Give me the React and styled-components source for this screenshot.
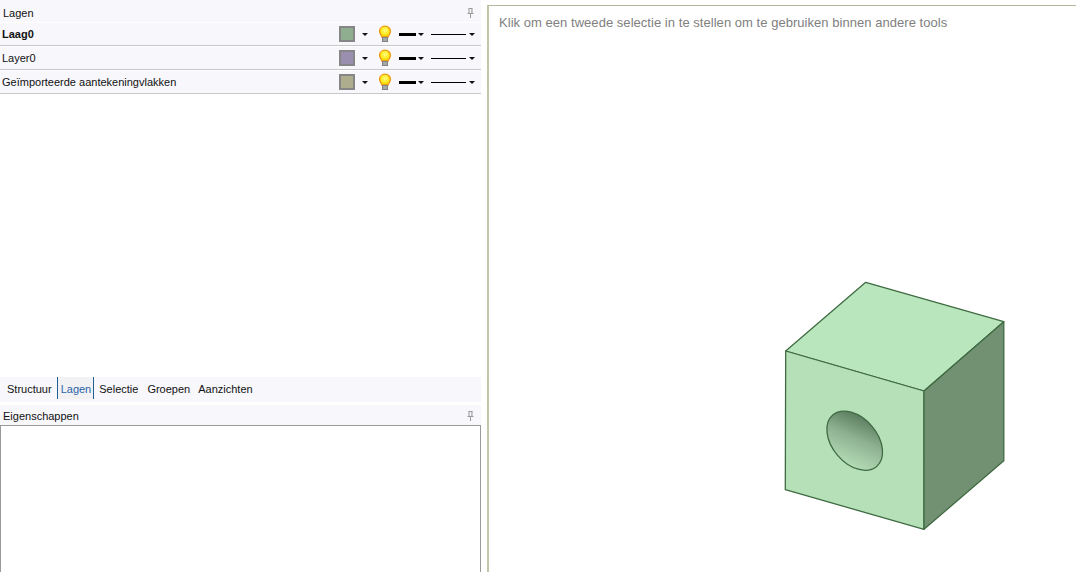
import React from 'react';
import styled, { createGlobalStyle } from 'styled-components';

const GlobalStyle = createGlobalStyle`
  html, body {
    margin: 0;
    padding: 0;
    background: #fff;
  }
  body {
    font-family: "Liberation Sans", Arial, sans-serif;
    font-size: 11px;
    color: #111;
  }
`;

const Page = styled.div`
  display: flex;
  width: 1076px;
  height: 572px;
  overflow: hidden;
  background: #fff;
`;

const SidePanel = styled.div`
  display: flex;
  flex-direction: column;
  width: 481px;
  flex: none;
`;

const DockHeader = styled.div`
  display: flex;
  align-items: center;
  justify-content: space-between;
  height: ${p => p.$height}px;
  margin-top: ${p => p.$top || 0}px;
  padding: ${p => p.$inset}px 6px 0 3px;
  box-sizing: border-box;
  background: #f7f7fc;
  flex: none;
`;

const LayerList = styled.div`
  flex: 1;
  background: #fff;
`;

const Row = styled.div`
  display: flex;
  align-items: center;
  height: 22px;
  margin-top: 1px;
  padding-left: 2px;
  background: #f7f7fc;
  border-bottom: 1px solid #c8c8c8;
`;

const RowName = styled.span`
  flex: 1;
  font-weight: ${p => (p.$active ? 700 : 400)};
`;

const Swatch = styled.span`
  width: 12px;
  height: 12px;
  border: 2px solid #868686;
  background: ${p => p.$color};
`;

const Caret = styled.span`
  width: 0;
  height: 0;
  margin-left: ${p => p.$gap}px;
  border-left: 3px solid transparent;
  border-right: 3px solid transparent;
  border-top: 3px solid #111;
`;

const Bulb = styled.svg`
  width: 14px;
  height: 18px;
  margin-left: 10px;
`;

const LineSample = styled.span`
  height: ${p => p.$weight}px;
  width: ${p => p.$width}px;
  margin-left: ${p => p.$gap}px;
  background: #000;
`;

const RowTools = styled.div`
  display: flex;
  align-items: center;
  padding-right: 6px;
`;

const TabBar = styled.div`
  display: flex;
  align-items: flex-start;
  height: 25px;
  padding-left: 5px;
  background: #f7f7fc;
  flex: none;
`;

const Tab = styled.div`
  display: flex;
  align-items: center;
  height: 22px;
  padding: 1px 2px 0 ${p => (p.$active ? '3px' : '2px')};
  box-sizing: border-box;
  margin-right: ${p => p.$gap}px;
  color: ${p => (p.$active ? '#2a62a8' : '#111')};
  background: ${p => (p.$active ? '#f2f2f4' : 'transparent')};
  border-left: ${p => (p.$active ? '1px solid #1f5f93' : 'none')};
  border-right: ${p => (p.$active ? '1px solid #1f5f93' : 'none')};
`;

const PropertiesBox = styled.div`
  height: 147px;
  box-sizing: border-box;
  border: 1px solid #9a9a9a;
  border-bottom: none;
  background: #fff;
  flex: none;
`;

const Viewer = styled.div`
  position: relative;
  flex: 1;
  margin: 5px 0 0 6px;
  border-top: 1px solid #b6b69c;
  border-left: 2px solid #c4c4a8;
  background: #fff;
`;

const Hint = styled.div`
  padding: 10px 0 0 10px;
  font-size: 13px;
  letter-spacing: 0.04px;
  color: #808080;
  line-height: 14px;
`;

const Model = styled.svg`
  position: absolute;
  left: 0;
  top: 0;
  width: 587px;
  height: 566px;
`;

const PinIcon = () => (
  <svg width="9" height="10" viewBox="0 0 9 10">
    <path d="M2.5.5h4M3 .5v5M6 .5v5M1.500 5.500h6M4.500 5.500V10" fill="none" stroke="#9a9a9a" />
    <path d="M5 1h1v4H5z" fill="#bdbdbd" />
  </svg>
);

const BulbIcon = () => (
  <Bulb viewBox="0 0 14 18">
    <defs>
      <radialGradient id="glass" cx="0.5" cy="0.4" r="0.6">
        <stop offset="0" stopColor="#ffff8c" />
        <stop offset="0.6" stopColor="#ffe81a" />
        <stop offset="1" stopColor="#f7c200" />
      </radialGradient>
    </defs>
    <path
      d="M7 1.200C3.800 1.200 1.500 3.400 1.500 6.300c0 2.400 1.800 3.600 2.400 5.700h6.200c.6-2.100 2.400-3.300 2.400-5.700 0-2.900-2.300-5.100-5.500-5.100z"
      fill="url(#glass)"
      stroke="#f09a18"
      strokeWidth="1.300"
    />
    <rect x="4.500" y="12.500" width="5" height="4" fill="#a8a8a8" stroke="#808080" />
  </Bulb>
);

const layers = [
  { name: 'Laag0', color: '#8fae8f', active: true },
  { name: 'Layer0', color: '#9a8fae' },
  { name: 'Geïmporteerde aantekeningvlakken', color: '#aeae8f' },
];

const tabs = [
  { label: 'Structuur', gap: 3 },
  { label: 'Lagen', gap: 3, active: true },
  { label: 'Selectie', gap: 5 },
  { label: 'Groepen', gap: 4 },
  { label: 'Aanzichten', gap: 0 },
];

// viewBox uses page pixels, the viewer content starts at (489, 6)
const CubeDrawing = () => (
  <Model viewBox="489 6 587 566">
    <defs>
      <linearGradient id="hole" x1="0.2" y1="0.05" x2="0.85" y2="0.95">
        <stop offset="0" stopColor="#587a5c" />
        <stop offset="0.45" stopColor="#8fb292" />
        <stop offset="1" stopColor="#b7e0b8" />
      </linearGradient>
    </defs>
    <g stroke="#3f6b42" strokeWidth="1.300" strokeLinejoin="round">
      <path d="M865.700 282.300 1003.800 321.700 924 391 785.700 351z" fill="#b9e6bc" />
      <path d="M785.700 351 924 391V529.300L785.300 489.700z" fill="#b6e1b8" />
      <path d="M924 391 1003.800 321.700V460.700L924 529.300z" fill="#729072" />
      <ellipse
        cx="854.700"
        cy="440.700"
        rx="33.800"
        ry="22.500"
        transform="rotate(49.500 854.700 440.700)"
        fill="url(#hole)"
      />
    </g>
  </Model>
);

export default function App() {
  return (
    <Page>
      <GlobalStyle />
      <SidePanel>
        <DockHeader $height={22} $inset={3}>
          <span>Lagen</span>
          <PinIcon />
        </DockHeader>
        <LayerList>
          {layers.map(layer => (
            <Row key={layer.name}>
              <RowName $active={layer.active}>{layer.name}</RowName>
              <RowTools>
                <Swatch $color={layer.color} />
                <Caret $gap={7} />
                <BulbIcon />
                <LineSample $weight={3} $width={17} $gap={7} />
                <Caret $gap={2} />
                <LineSample $weight={1} $width={35} $gap={7} />
                <Caret $gap={3} />
              </RowTools>
            </Row>
          ))}
        </LayerList>
        <TabBar>
          {tabs.map(tab => (
            <Tab key={tab.label} $active={tab.active} $gap={tab.gap}>
              {tab.label}
            </Tab>
          ))}
        </TabBar>
        <DockHeader $height={20} $top={3} $inset={2}>
          <span>Eigenschappen</span>
          <PinIcon />
        </DockHeader>
        <PropertiesBox />
      </SidePanel>
      <Viewer>
        <Hint>Klik om een tweede selectie in te stellen om te gebruiken binnen andere tools</Hint>
        <CubeDrawing />
      </Viewer>
    </Page>
  );
}
